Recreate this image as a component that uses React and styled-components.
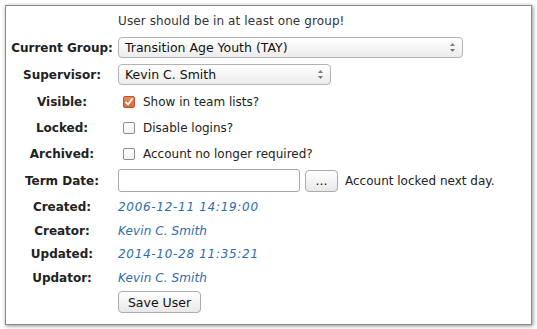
import React from 'react';
import styled, { createGlobalStyle } from 'styled-components';

const GlobalStyle = createGlobalStyle`
    html, body {
        margin: 0;
        padding: 0;
        background: #fff;
    }
    body {
        font-family: "DejaVu Sans", Verdana, sans-serif;
        font-size: 12px;
        color: #222;
    }
`;

const Page = styled.div`
    padding: 5px;
    width: 537px;
    height: 329px;
    box-sizing: border-box;
`;

const Panel = styled.div`
    width: 527px;
    height: 320px;
    box-sizing: border-box;
    border: 1px solid #8a8a8a;
    box-shadow: 1px 1px 4px rgba(0, 0, 0, 0.45);
    background: #fff;
    padding-top: 2px;
`;

const Row = styled.div`
    display: grid;
    grid-template-columns: 112px 1fr;
    align-items: center;
    height: ${p => p.h}px;
`;

const Label = styled.div`
    font-weight: bold;
    text-align: center;
    color: #222;
`;

const Value = styled.div`
    display: flex;
    align-items: center;
`;

const Message = styled.div`
    color: #333;
    letter-spacing: 0.1px;
`;

const SelectBox = styled.div`
    width: ${p => p.width}px;
    height: 21px;
    box-sizing: border-box;
    border: 1px solid #b3b3b3;
    border-radius: 4px;
    background: linear-gradient(#ffffff, #ececec);
    display: flex;
    align-items: center;
    justify-content: space-between;
    padding: 0 6px 0 6px;
    color: #111;
    font-size: 12.5px;
`;

const Arrows = () => (
    <svg width="7" height="11" viewBox="0 0 7 11">
        <path d="M3.5 1 L6 4 L1 4 Z" fill="#777" />
        <path d="M3.5 10 L6 7 L1 7 Z" fill="#777" />
    </svg>
);

const Check = styled.span`
    width: 12px;
    height: 12px;
    box-sizing: border-box;
    border-radius: 2px;
    margin-left: 5px;
    border: 1px solid ${p => (p.checked ? '#b5542c' : '#8c8c8c')};
    background: ${p => (p.checked ? 'linear-gradient(#ea8a5e, #d9693d)' : 'linear-gradient(#fff, #f2f2f2)')};
    display: inline-flex;
    align-items: center;
    justify-content: center;
`;

const CheckLabel = styled.span`
    margin-left: 8px;
    color: #222;
`;

const TextInput = styled.div`
    width: 182px;
    height: 23px;
    box-sizing: border-box;
    border: 1px solid #a8a8a8;
    border-radius: 3px;
    background: #fff;
`;

const Button = styled.div`
    width: ${p => p.width}px;
    height: ${p => p.height || 22}px;
    margin-left: ${p => p.gap || 0}px;
    box-sizing: border-box;
    border: 1px solid #ababab;
    border-radius: 4px;
    background: linear-gradient(#ffffff, #e8e8e8);
    display: flex;
    align-items: center;
    justify-content: center;
    color: #111;
    font-size: 12.5px;
`;

const Note = styled.span`
    margin-left: 7px;
`;

const Info = styled.span`
    font-style: italic;
    color: #2d6db0;
    letter-spacing: ${p => p.spacing || 0}px;
`;

const CheckRow = ({ label, text, checked, h }) => (
    <Row h={h}>
        <Label>{label}</Label>
        <Value>
            <Check checked={checked}>
                {checked && (
                    <svg width="10" height="10" viewBox="0 0 10 10">
                        <path d="M1.5 5 L4 7.5 L8.5 1.5" stroke="#fff" strokeWidth="1.8" fill="none" />
                    </svg>
                )}
            </Check>
            <CheckLabel>{text}</CheckLabel>
        </Value>
    </Row>
);

const InfoRow = ({ label, value, h, spacing }) => (
    <Row h={h}>
        <Label>{label}</Label>
        <Value><Info spacing={spacing}>{value}</Info></Value>
    </Row>
);

const App = () => (
    <Page>
        <GlobalStyle />
        <Panel>
            <Row h={26}>
                <div />
                <Message>User should be in at least one group!</Message>
            </Row>
            <Row h={27}>
                <Label>Current Group:</Label>
                <Value>
                    <SelectBox width={345}>Transition Age Youth (TAY)<Arrows /></SelectBox>
                </Value>
            </Row>
            <Row h={27}>
                <Label>Supervisor:</Label>
                <Value>
                    <SelectBox width={213}>Kevin C. Smith<Arrows /></SelectBox>
                </Value>
            </Row>
            <CheckRow h={27} label="Visible:" text="Show in team lists?" checked />
            <CheckRow h={26} label="Locked:" text="Disable logins?" />
            <CheckRow h={26} label="Archived:" text="Account no longer required?" />
            <Row h={27}>
                <Label>Term Date:</Label>
                <Value>
                    <TextInput />
                    <Button width={33} gap={5}>...</Button>
                    <Note>Account locked next day.</Note>
                </Value>
            </Row>
            <InfoRow h={25} label="Created:" value="2006-12-11 14:19:00" spacing={0.7} />
            <InfoRow h={23} label="Creator:" value="Kevin C. Smith" spacing={0.1} />
            <InfoRow h={24} label="Updated:" value="2014-10-28 11:35:21" spacing={0.7} />
            <InfoRow h={23} label="Updator:" value="Kevin C. Smith" spacing={0.1} />
            <Row h={26}>
                <div />
                <Value>
                    <Button width={83} height={22}>Save User</Button>
                </Value>
            </Row>
        </Panel>
    </Page>
);

export default App;
